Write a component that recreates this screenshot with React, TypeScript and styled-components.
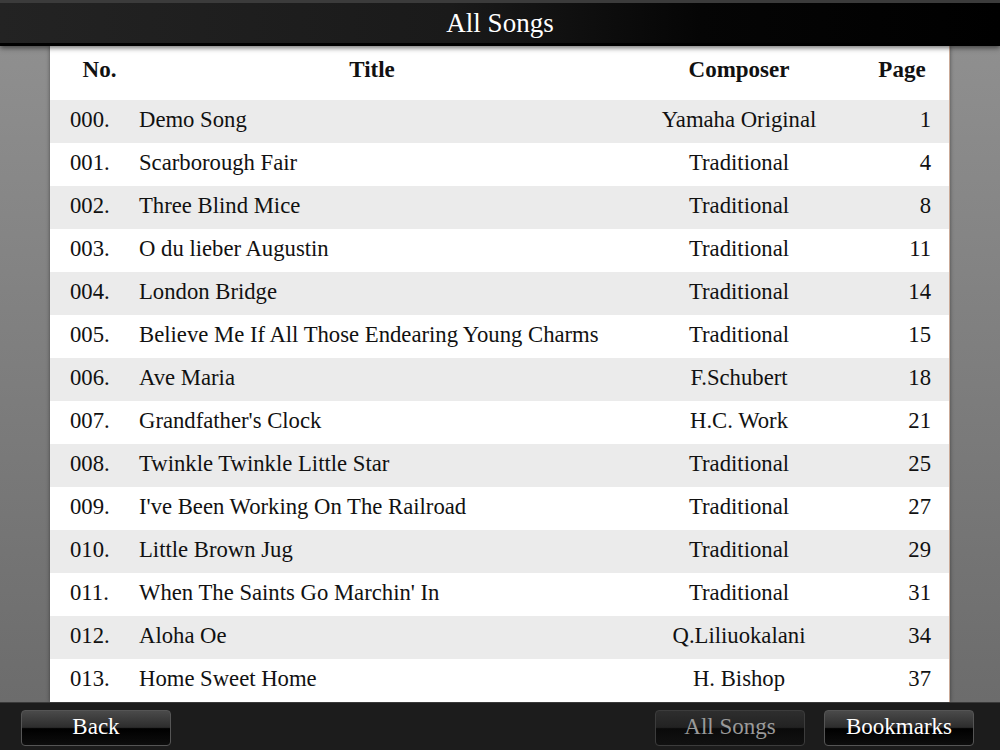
import React from "react";
import styled, { createGlobalStyle } from "styled-components";

const GlobalStyle = createGlobalStyle`
    html, body {
        margin: 0;
        padding: 0;
        background: #1c1c1c;
    }
    body {
        font-family: "Liberation Serif", "Times New Roman", serif;
    }
`

const Screen = styled.div`
    width: 1000px;
    height: 750px;
    display: flex;
    flex-direction: column;
    overflow: hidden;
`

const TitleBar = styled.header`
    position: relative;
    z-index: 2;
    height: 40px;
    border-top: 3px solid #3b3b3b;
    border-bottom: 3px solid #000;
    background: linear-gradient(to right, #232323 0%, #1a1a1a 45%, #050505 70%, #000 100%);
    display: flex;
    align-items: center;
    justify-content: center;
    color: #fff;
    font-size: 27px;
    box-sizing: content-box;
    box-shadow: 0 2px 5px rgba(0, 0, 0, 0.55);
`

const Stage = styled.main`
    height: 656px;
    background: linear-gradient(to bottom, #8f8f8f 0%, #6c6c6c 100%);
    padding: 0 50px;
    display: flex;
`

const Panel = styled.div`
    flex: 1;
    background: #fff;
    border-right: 1px solid #c9aa98;
    box-shadow: 0 0 4px rgba(0, 0, 0, 0.45);
    display: flex;
    flex-direction: column;
`

const Row = styled.div<{ $shade?: boolean; $head?: boolean }>`
    display: grid;
    grid-template-columns: 79px 466px 268px 58px;
    padding-left: 10px;
    height: ${(p) => (p.$head ? "54px" : "43px")};
    align-items: center;
    background: ${(p) => (p.$shade ? "#ebebeb" : "#fff")};
    color: #111;
    font-size: ${(p) => (p.$head ? "23px" : "22.7px")};
    font-weight: ${(p) => (p.$head ? "bold" : "normal")};
    padding-bottom: ${(p) => (p.$head ? "6px" : "3px")};
    box-sizing: border-box;
`

const Cell = styled.div<{ $align: "left" | "center" | "right"; $pad?: number }>`
    text-align: ${(p) => p.$align};
    padding-left: ${(p) => p.$pad ?? 0}px;
    white-space: nowrap;
`

const Footer = styled.footer`
    flex: 1;
    background: #1c1c1c;
    border-top: 1px solid #3a3a3a;
    display: flex;
    align-items: flex-start;
    padding: 7px 26px 0 21px;
    gap: 19px;
`

const Spacer = styled.div`
    flex: 1;
`

const NavButton = styled.button<{ $active?: boolean }>`
    width: 150px;
    height: 36px;
    border-radius: 4px;
    border: 1px solid ${(p) => (p.$active ? "#3c3c3c" : "#555")};
    background: ${(p) =>
        p.$active
            ? "linear-gradient(to bottom, #2e2e2e 0%, #222 48%, #0a0a0a 52%, #111 100%)"
            : "linear-gradient(to bottom, #4a4a4a 0%, #2d2d2d 48%, #000 52%, #0d0d0d 100%)"};
    color: ${(p) => (p.$active ? "#9a9a9a" : "#fff")};
    font-family: "Liberation Serif", "Times New Roman", serif;
    font-size: 23px;
    padding: 0 0 3px;
    cursor: pointer;
`

type Song = { no: string; title: string; composer: string; page: number };

const songs: Song[] = [
    { no: "000.", title: "Demo Song", composer: "Yamaha Original", page: 1 },
    { no: "001.", title: "Scarborough Fair", composer: "Traditional", page: 4 },
    { no: "002.", title: "Three Blind Mice", composer: "Traditional", page: 8 },
    { no: "003.", title: "O du lieber Augustin", composer: "Traditional", page: 11 },
    { no: "004.", title: "London Bridge", composer: "Traditional", page: 14 },
    { no: "005.", title: "Believe Me If All Those Endearing Young Charms", composer: "Traditional", page: 15 },
    { no: "006.", title: "Ave Maria", composer: "F.Schubert", page: 18 },
    { no: "007.", title: "Grandfather's Clock", composer: "H.C. Work", page: 21 },
    { no: "008.", title: "Twinkle Twinkle Little Star", composer: "Traditional", page: 25 },
    { no: "009.", title: "I've Been Working On The Railroad", composer: "Traditional", page: 27 },
    { no: "010.", title: "Little Brown Jug", composer: "Traditional", page: 29 },
    { no: "011.", title: "When The Saints Go Marchin' In", composer: "Traditional", page: 31 },
    { no: "012.", title: "Aloha Oe", composer: "Q.Liliuokalani", page: 34 },
    { no: "013.", title: "Home Sweet Home", composer: "H. Bishop", page: 37 },
];

export default function App() {
    return (
        <Screen>
            <GlobalStyle />
            <TitleBar>All Songs</TitleBar>
            <Stage>
                <Panel>
                    <Row $head>
                        <Cell $align="center">No.</Cell>
                        <Cell $align="center">Title</Cell>
                        <Cell $align="center">Composer</Cell>
                        <Cell $align="center">Page</Cell>
                    </Row>
                    {songs.map((s, i) => (
                        <Row key={s.no} $shade={i % 2 === 0}>
                            <Cell $align="left" $pad={10}>{s.no}</Cell>
                            <Cell $align="left">{s.title}</Cell>
                            <Cell $align="center">{s.composer}</Cell>
                            <Cell $align="right">{s.page}</Cell>
                        </Row>
                    ))}
                </Panel>
            </Stage>
            <Footer>
                <NavButton>Back</NavButton>
                <Spacer />
                <NavButton $active>All Songs</NavButton>
                <NavButton>Bookmarks</NavButton>
            </Footer>
        </Screen>
    );
}
